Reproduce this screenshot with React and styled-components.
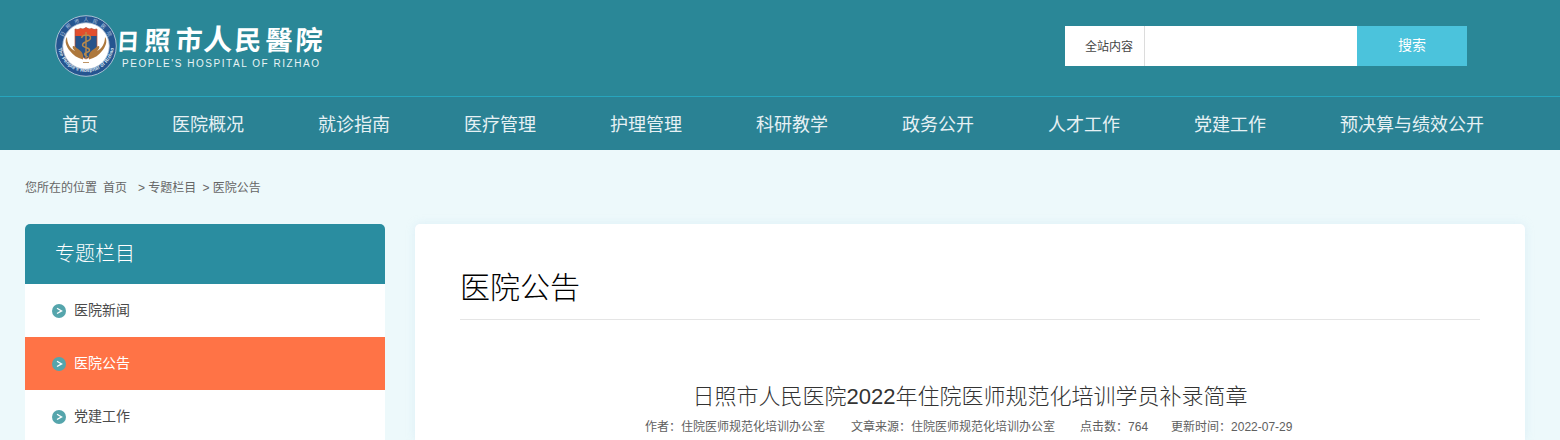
import React from 'react'
import styled, { createGlobalStyle } from 'styled-components'

const GlobalStyle = createGlobalStyle`
  * {
    box-sizing: border-box;
  }
  body {
    margin: 0;
    color: #555;
    font-family: 'Liberation Sans', 'Noto Sans CJK SC', sans-serif;
    font-size: 12px;
    font-weight: 400;
  }
  a {
    color: inherit;
    text-decoration: none;
  }
`
const Page = styled.div`
  height: 440px;
  overflow: hidden;
  background: #edf9fb;
`
const Header = styled.header`
  display: flex;
  justify-content: space-between;
  align-items: flex-start;
  height: 96px;
  padding: 0 93px 0 50px;
  background: #2a8797;
`
const LogoSvg = styled.svg`
  display: block;
  width: 280px;
  height: 90px;
`
const SearchForm = styled.form`
  display: flex;
  width: 402px;
  height: 40px;
  margin-top: 26px;
  background: #fff;
`
const SearchScope = styled.div`
  width: 80px;
  padding-left: 20px;
  border-right: 1px solid #dcdcdc;
  color: #444;
  line-height: 42px;
`
const SearchInput = styled.input`
  flex: 1 1 auto;
  min-width: 0;
  border: 0;
  background: transparent;
`
const SearchButton = styled.button`
  width: 110px;
  padding: 0 0 4px;
  border: 0;
  background: #4bc3dc;
  color: #fff;
  font: inherit;
  font-size: 14px;
`
const Nav = styled.nav`
  display: flex;
  height: 54px;
  padding-left: 25px;
  border-top: 1px solid #27a5bd;
  background: #2a8294;
  a {
    padding: 0 37px;
    color: #e6f1f4;
    font-size: 18px;
    line-height: 56px;
    white-space: nowrap;
  }
`
const Breadcrumb = styled.div`
  display: flex;
  height: 74px;
  padding-left: 25px;
  color: #666;
  line-height: 76px;
  white-space: pre;
`
const Crumb = styled.span`
  margin-left: ${props => props.$left || 0}px;
`
const Columns = styled.div`
  display: flex;
  align-items: flex-start;
  gap: 30px;
  padding: 0 35px 0 25px;
`
const Sidebar = styled.aside`
  flex: 0 0 360px;
  height: 216px;
  overflow: hidden;
  border-radius: 5px 5px 0 0;
  background: #fff;
`
const SidebarTitle = styled.h2`
  height: 60px;
  margin: 0;
  padding-left: 30px;
  background: #2a8da0;
  color: #fff;
  font-size: 20px;
  font-weight: 300;
  line-height: 60px;
`
const SidebarItem = styled.a`
  display: flex;
  align-items: center;
  height: 53px;
  padding-left: 27px;
  background: ${props => (props.$active ? '#ff7346' : '#fff')};
  color: ${props => (props.$active ? '#fff' : '#4b4b4b')};
  font-size: 14px;
  svg {
    margin: 1px 8px 0 0;
  }
`
const SidebarLabel = styled.span`
  padding-bottom: 3px;
`
const Article = styled.main`
  flex: 1 1 auto;
  height: 216px;
  padding: 0 45px;
  border-radius: 5px 5px 0 0;
  background: #fff;
  box-shadow: 0 0 8px rgba(190, 220, 240, 0.35);
`
const ArticleSection = styled.h1`
  height: 96px;
  margin: 0;
  padding-top: 38px;
  border-bottom: 1px solid #e5e5e5;
  color: #000;
  font-size: 30px;
  font-weight: 300;
  line-height: 52px;
`
const ArticleTitle = styled.h3`
  margin: 61px 0 0;
  color: #333;
  font-size: 22px;
  font-weight: 300;
  line-height: 32px;
  text-align: center;
`
const ArticleMeta = styled.div`
  display: flex;
  height: 24px;
  padding-left: 185px;
  color: #606060;
  line-height: 28px;
  white-space: nowrap;
`
const MetaField = styled.span`
  margin-right: ${props => props.$gap || 0}px;
`

const NAV_ITEMS = [
  '首页',
  '医院概况',
  '就诊指南',
  '医疗管理',
  '护理管理',
  '科研教学',
  '政务公开',
  '人才工作',
  '党建工作',
  '预决算与绩效公开'
]
const SIDEBAR_ITEMS = ['医院新闻', '医院公告', '党建工作']
// the characters of the name are brushed at slightly different sizes
const LOGO_CHARS = [
  { char: '日', x: 66, y: 50, size: 23 },
  { char: '照', x: 94, y: 50, size: 26 },
  { char: '市', x: 125, y: 50, size: 27 },
  { char: '人', x: 153, y: 50, size: 29 },
  { char: '民', x: 184, y: 50, size: 27 },
  { char: '醫', x: 215, y: 50, size: 27 },
  { char: '院', x: 245, y: 50, size: 27 }
]

function Logo () {
  return (
    <LogoSvg viewBox='0 0 280 90'>
      <defs>
        <path id='ring-top' d='M11.5 46a24.5 24.5 0 0 1 49 0' />
        <path id='ring-bottom' d='M8 44a28 28 0 0 0 56 0' />
      </defs>
      <circle cx='36' cy='46' r='30.3' fill='#255590' stroke='#a9c1d4' strokeWidth='1' />
      <circle cx='36' cy='46' r='23.3' fill='#fff' stroke='#a6b9d0' strokeWidth='0.8' />
      <text fill='#b9cbe0' fontSize='5'>
        <textPath href='#ring-top' startOffset='50%' textAnchor='middle' textLength='58'>
          日照市人民医院
        </textPath>
      </text>
      <text fill='#dce7f2' fontSize='5' fontWeight='700'>
        <textPath href='#ring-bottom' startOffset='50%' textAnchor='middle' textLength='80'>
          The People's Hospital of Rizhao
        </textPath>
      </text>
      <path
        d='M25 29q3 1.300 5.500-.6q3 1.600 5.500-.8q3 2.400 5.500.8q2.500 1.900 5.500.6v18q0 7-11 12q-11-5-11-12z'
        fill='#27538a'
        stroke='#c15330'
        strokeWidth='0.7'
      />
      <path
        d='M25.200 29q3 1.300 5.300-.6q3 1.600 5.500-.8q3 2.400 5.500.8q2.500 1.900 5.300.6v7h-21.600z'
        fill='#e34e2c'
      />
      <path
        d='M36 32v27M31.500 38c1-4 9-4 9 0c0 4-8 3-8 7c0 3 7 2 7 5c0 3-5 2-5 4c0 2 3 2 3 3'
        fill='none'
        stroke='#b98a4c'
        strokeWidth='1.400'
      />
      <path
        d='M17 37c-3 4-.500 10 3 14c3 4 7 7 13 8.500c1-5-1-8-5-10.500c-2-1.500-3-3-5-3c-1 1 0 3 2 5c-5-2-8-8-8-14z'
        fill='#ad783d'
      />
      <path
        d='M55 37c3 4 .500 10-3 14c-3 4-7 7-13 8.500c-1-5 1-8 5-10.500c2-1.500 3-3 5-3c1 1 0 3-2 5c5-2 8-8 8-14z'
        fill='#ad783d'
      />
      <path d='M33 62.500h6' stroke='#ad783d' strokeWidth='0.800' />
      <g
        fill='#fff'
        fontFamily="'Noto Sans CJK SC', sans-serif"
        fontWeight='700'
      >
        {LOGO_CHARS.map(({ char, x, y, size }) => (
          <text
            key={char}
            fontSize={size}
            transform={`translate(${x} ${y}) skewX(-3)`}
          >
            {char}
          </text>
        ))}
      </g>
      <text x='72' y='67' fill='#e8f3f5' fontSize='10' textLength='197'>
        PEOPLE'S HOSPITAL OF RIZHAO
      </text>
    </LogoSvg>
  )
}

function ArrowIcon () {
  return (
    <svg width='14' height='14' viewBox='0 0 14 14'>
      <circle cx='7' cy='7' r='7' fill='#55a5ac' />
      <path d='M5 4.300l4.600 2.600L5 9.500' fill='none' stroke='#fff' strokeWidth='1.300' />
    </svg>
  )
}

export default function App () {
  return (
    <Page>
      <GlobalStyle />
      <Header>
        <Logo />
        <SearchForm>
          <SearchScope>全站内容</SearchScope>
          <SearchInput type='text' />
          <SearchButton type='button'>搜索</SearchButton>
        </SearchForm>
      </Header>
      <Nav>
        {NAV_ITEMS.map(item => (
          <a key={item} href='#'>
            {item}
          </a>
        ))}
      </Nav>
      <Breadcrumb>
        <Crumb>您所在的位置</Crumb>
        <Crumb $left={6}>首页</Crumb>
        <Crumb $left={11}>&gt; 专题栏目</Crumb>
        <Crumb $left={6}>&gt; 医院公告</Crumb>
      </Breadcrumb>
      <Columns>
        <Sidebar>
          <SidebarTitle>专题栏目</SidebarTitle>
          {SIDEBAR_ITEMS.map(item => (
            <SidebarItem key={item} href='#' $active={item === '医院公告'}>
              <ArrowIcon />
              <SidebarLabel>{item}</SidebarLabel>
            </SidebarItem>
          ))}
        </Sidebar>
        <Article>
          <ArticleSection>医院公告</ArticleSection>
          <ArticleTitle>日照市人民医院2022年住院医师规范化培训学员补录简章</ArticleTitle>
          <ArticleMeta>
            <MetaField $gap={26}>作者：住院医师规范化培训办公室</MetaField>
            <MetaField $gap={25}>文章来源：住院医师规范化培训办公室</MetaField>
            <MetaField $gap={23}>点击数：764</MetaField>
            <MetaField>更新时间：2022-07-29</MetaField>
          </ArticleMeta>
        </Article>
      </Columns>
    </Page>
  )
}
